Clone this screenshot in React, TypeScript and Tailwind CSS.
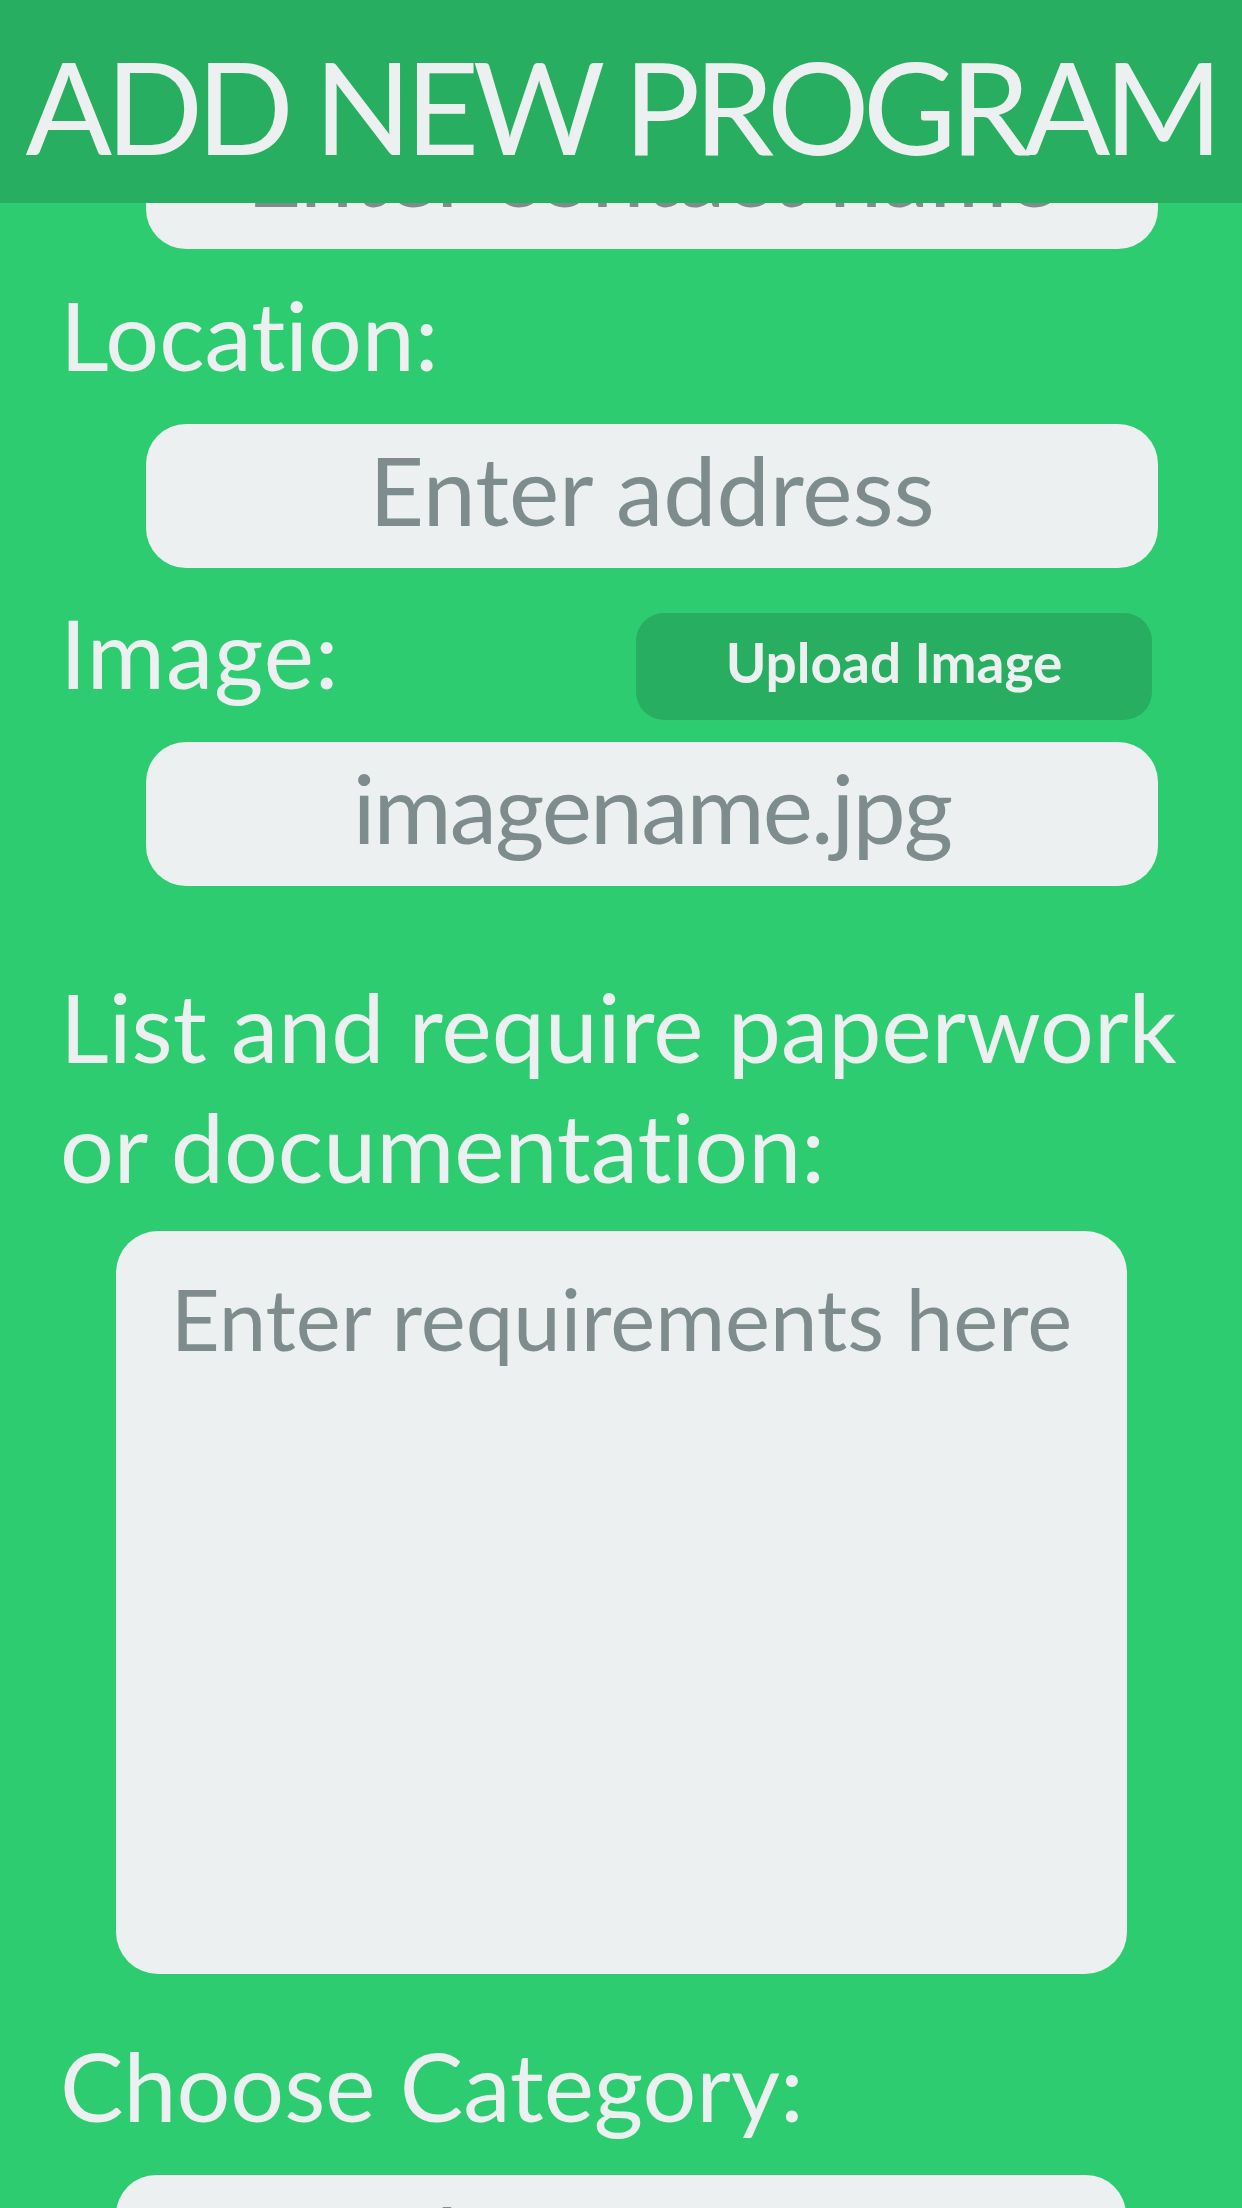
const label = "text-[95px] leading-[120px] text-[#ecf0f1]";
const field =
  "h-[144px] rounded-[40px] bg-[#ecf0f1] pt-[5px] text-center text-[95px] leading-[120px] text-[#7f8c8d] whitespace-nowrap overflow-hidden";

export default function App() {
  return (
    <div className="relative h-[2208px] w-[1242px] overflow-hidden bg-[#2ecc71] font-['Lato',sans-serif] [font-variant-ligatures:none]">
      {/* Fixed title bar */}
      <header className="absolute inset-x-0 top-0 z-10 h-[203px] bg-[#27ae60] pt-[42px] text-center">
        <h1 className="text-[128px] leading-none text-[#ecf0f1] tracking-[-0.05em] whitespace-nowrap">
          ADD NEW PROGRAM
        </h1>
      </header>

      <main className="flex flex-col pt-[105px]">
        <div className={`${field} ml-[146px] w-[1012px]`}>Enter contact name</div>

        <p className={`${label} mt-[25px] pl-[60px]`}>Location:</p>
        <div className={`${field} ml-[146px] mt-[30px] w-[1012px]`}>Enter address</div>

        <div className="mt-[24px] flex items-start justify-between pl-[60px] pr-[90px]">
          <p className={`${label} tracking-[0.01em]`}>Image:</p>
          <button className="mt-[21px] flex h-[107px] w-[516px] items-center justify-center rounded-[28px] bg-[#27ae60] pb-[9px] text-[55px] font-bold text-[#ecf0f1]">
            Upload Image
          </button>
        </div>
        <div className={`${field} ml-[146px] mt-[22px] w-[1012px] tracking-[-0.02em]`}>imagename.jpg</div>

        <p className={`${label} mt-[80px] pl-[60px] pr-[30px]`}>
          List and require paperwork or documentation:
        </p>
        <div className="ml-[116px] mt-[25px] h-[743px] w-[1011px] rounded-[42px] bg-[#ecf0f1] pt-[27px] text-center text-[85px] leading-[120px] text-[#7f8c8d]">
          Enter requirements here
        </div>

        <p className={`${label} mt-[51px] pl-[60px]`}>Choose Category:</p>
        <div className={`${field} ml-[116px] mt-[30px] w-[1010px]`}>Choose one</div>
      </main>
    </div>
  );
}
